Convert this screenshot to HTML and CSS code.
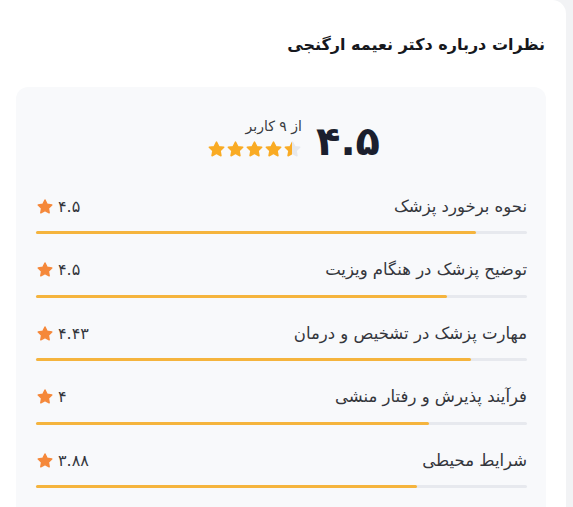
FILE: index.html
```html
<!DOCTYPE html>
<html lang="fa" dir="rtl">
<head>
<meta charset="utf-8">
<link rel="stylesheet" href="styles.css">
</head>
<body>
<svg width="0" height="0" class="defs" aria-hidden="true">
  <defs>
    <path id="star" d="M10 2.2 L12.4 7 L17.6 7.7 L13.8 11.4 L14.7 16.6 L10 14.1 L5.3 16.6 L6.2 11.4 L2.4 7.7 L7.6 7 Z"/>
    <linearGradient id="half" x1="0" x2="1" y1="0" y2="0">
      <stop offset="0.5" stop-color="#f9ab24"/>
      <stop offset="0.5" stop-color="#e6e8ec"/>
    </linearGradient>
  </defs>
</svg>
<div class="panel">
  <h2 class="title">نظرات درباره دکتر نعیمه ارگنجی</h2>
  <div class="card">
    <div class="summary">
      <div class="avg">۴.۵</div>
      <div class="meta">
        <div class="count">از ۹ کاربر</div>
        <div class="stars">
          <svg viewBox="0 0 20 19" class="s"><use href="#star"/></svg>
          <svg viewBox="0 0 20 19" class="s"><use href="#star"/></svg>
          <svg viewBox="0 0 20 19" class="s"><use href="#star"/></svg>
          <svg viewBox="0 0 20 19" class="s"><use href="#star"/></svg>
          <svg viewBox="0 0 20 19" class="s half"><use href="#star" fill="url(#half)" stroke="url(#half)"/></svg>
        </div>
      </div>
    </div>

    <div class="row">
      <div class="row-head">
        <span class="label">نحوه برخورد پزشک</span>
        <span class="score"><span>۴.۵</span><svg viewBox="0 0 20 19" class="rs"><use href="#star"/></svg></span>
      </div>
      <div class="bar"><div class="fill" style="width:89.6%"></div></div>
    </div>

    <div class="row">
      <div class="row-head">
        <span class="label">توضیح پزشک در هنگام ویزیت</span>
        <span class="score"><span>۴.۵</span><svg viewBox="0 0 20 19" class="rs"><use href="#star"/></svg></span>
      </div>
      <div class="bar"><div class="fill" style="width:83.7%"></div></div>
    </div>

    <div class="row">
      <div class="row-head">
        <span class="label">مهارت پزشک در تشخیص و درمان</span>
        <span class="score"><span>۴.۴۳</span><svg viewBox="0 0 20 19" class="rs"><use href="#star"/></svg></span>
      </div>
      <div class="bar"><div class="fill" style="width:88.6%"></div></div>
    </div>

    <div class="row">
      <div class="row-head">
        <span class="label">فرآیند پذیرش و رفتار منشی</span>
        <span class="score"><span>۴</span><svg viewBox="0 0 20 19" class="rs"><use href="#star"/></svg></span>
      </div>
      <div class="bar"><div class="fill" style="width:80%"></div></div>
    </div>

    <div class="row">
      <div class="row-head">
        <span class="label">شرایط محیطی</span>
        <span class="score"><span>۳.۸۸</span><svg viewBox="0 0 20 19" class="rs"><use href="#star"/></svg></span>
      </div>
      <div class="bar"><div class="fill" style="width:77.6%"></div></div>
    </div>
  </div>
</div>
</body>
</html>
```

FILE: styles.css
```css
* { box-sizing: border-box; }
html, body { margin: 0; padding: 0; }
body {
  background: #f2f3f5;
  font-family: "DejaVu Sans", "Noto Sans", sans-serif;
  color: #2b2d33;
  width: 573px;
  height: 507px;
  overflow: hidden;
}
.defs { position: absolute; }
.panel {
  width: 566px;
  margin-left: auto;
  margin-right: 7px;
  height: 520px;
  background: #ffffff;
  border-top-right-radius: 14px;
  padding: 31px 20px 0 16px;
}
.title {
  margin: 0;
  padding-right: 1px;
  font-size: 16px;
  font-weight: bold;
  color: #16181d;
  line-height: 28px;
  height: 28px;
}
.card {
  margin-top: 28px;
  background: #f8f9fb;
  border-radius: 12px;
  padding: 22px 19px 0 20px;
  height: 440px;
}
.summary {
  display: flex;
  justify-content: center;
  align-items: center;
  gap: 14px;
  padding-left: 24px;
  height: 56px;
}
.avg {
  font-size: 40px;
  font-weight: bold;
  color: #1b1f2e;
  line-height: 42px;
  margin-top: 8px;
}
.meta {
  display: flex;
  flex-direction: column;
  align-items: flex-end;
  gap: 5px;
}
.count {
  font-size: 14px;
  color: #3a3c42;
  line-height: 18px;
  align-self: flex-start;
}
.stars {
  display: flex;
  direction: ltr;
  gap: 0;
}
.s {
  width: 19px; height: 18px; display: block;
  fill: #f9ab24; stroke: #f9ab24; stroke-width: 1.6; stroke-linejoin: round;
}
.row {
  display: flex;
  flex-direction: column;
}
.summary + .row { margin-top: 26px; }
.row + .row { margin-top: 20.5px; }
.row-head {
  display: flex;
  justify-content: space-between;
  align-items: center;
  height: 30px;
}
.label {
  font-size: 16.5px;
  color: #34363c;
}
.score {
  display: flex;
  align-items: center;
  gap: 4px;
  font-size: 16px;
  color: #34363c;
}
.rs {
  width: 18px; height: 17px; display: block;
  fill: #f5883a; stroke: #f5883a; stroke-width: 1.6; stroke-linejoin: round;
}
.bar {
  direction: ltr;
  margin-top: 10px;
  height: 3px;
  background: #e7e9ee;
  border-radius: 2px;
}
.fill {
  height: 3px;
  background: #f5b43d;
  border-radius: 2px;
}
```
